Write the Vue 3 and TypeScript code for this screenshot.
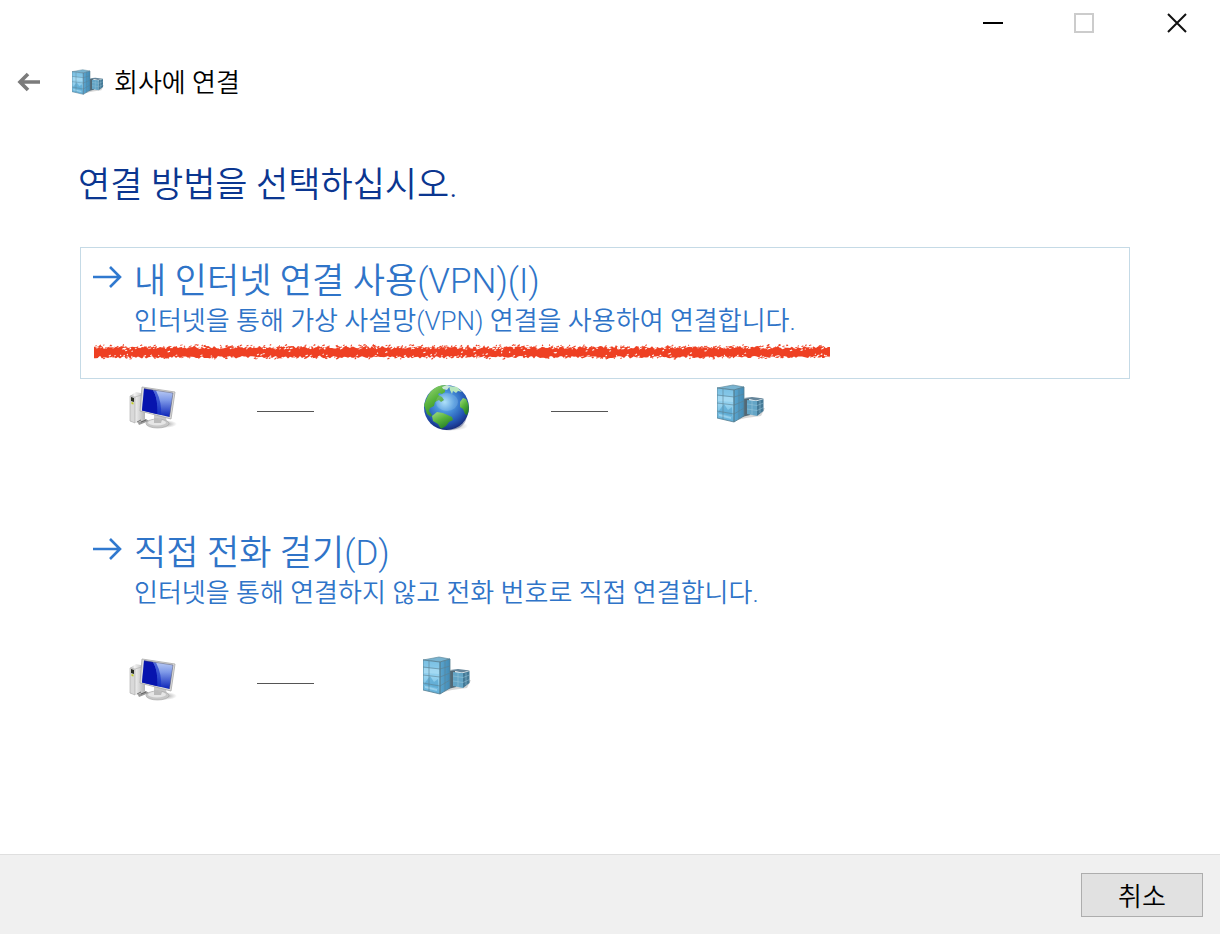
<script setup lang="ts">
type NodeKind = 'computer' | 'globe' | 'building'

interface ConnectionOption {
  id: string
  title: string
  description: string
  highlighted: boolean
  nodes: NodeKind[]
}

const options: ConnectionOption[] = [
  {
    id: 'vpn',
    title: '내 인터넷 연결 사용(VPN)(I)',
    description: '인터넷을 통해 가상 사설망(VPN) 연결을 사용하여 연결합니다.',
    highlighted: true,
    nodes: ['computer', 'globe', 'building'],
  },
  {
    id: 'dial',
    title: '직접 전화 걸기(D)',
    description: '인터넷을 통해 연결하지 않고 전화 번호로 직접 연결합니다.',
    highlighted: false,
    nodes: ['computer', 'building'],
  },
]

// Small seeded generator so the crayon stroke has the same grain on every render.
function createRandom(seed: number): () => number {
  let state = seed
  return () => {
    state = (state * 1664525 + 1013904223) % 4294967296
    return state / 4294967296
  }
}

function crayonBody(): string {
  const random = createRandom(7)
  const top: string[] = []
  const bottom: string[] = []
  for (let x = 1; x <= 738; x += 2) {
    top.push(`${x} ${(2 + random() * 2.5).toFixed(1)}`)
    bottom.unshift(`${x} ${(12 + random() * 2.5).toFixed(1)}`)
  }
  return `M${top.concat(bottom).join('L')}Z`
}

function crayonGrain(seed: number, count: number, from: number, to: number): string {
  const random = createRandom(seed)
  let path = ''
  for (let i = 0; i < count; i++) {
    const x = (random() * 735).toFixed(1)
    const y = (from + random() * (to - from)).toFixed(1)
    const w = (0.8 + random() * 1.6).toFixed(1)
    const h = (0.5 + random() * 0.9).toFixed(1)
    path += `M${x} ${y}l${w} -${h}l0.6 ${h}l-${w} 0.7z`
  }
  return path
}

const strokeBody = crayonBody()
const strokeGaps = crayonGrain(23, 300, 2, 5) + crayonGrain(51, 90, 11, 14) + crayonGrain(77, 40, 6, 11)
const strokeDust = crayonGrain(91, 260, 1, 4) + crayonGrain(37, 90, 13, 15)
</script>

<template>
  <div class="wizard">
    <svg class="defs" aria-hidden="true">
      <defs>
        <linearGradient id="screen" x1="0.6" y1="0" x2="0.6" y2="1">
          <stop offset="0" stop-color="#c3d2f6" />
          <stop offset="0.4" stop-color="#7f9ae8" />
          <stop offset="1" stop-color="#0b23b8" />
        </linearGradient>
        <linearGradient id="metal" x1="0" y1="0" x2="1" y2="0">
          <stop offset="0" stop-color="#a9a9a9" />
          <stop offset="0.3" stop-color="#f2f2f2" />
          <stop offset="1" stop-color="#b5b5b5" />
        </linearGradient>
        <radialGradient id="shade">
          <stop offset="0" stop-color="#555" stop-opacity="0.6" />
          <stop offset="1" stop-color="#777" stop-opacity="0" />
        </radialGradient>
        <radialGradient id="ocean" cx="0.46" cy="0.38" r="0.62">
          <stop offset="0" stop-color="#a4dcf8" />
          <stop offset="0.35" stop-color="#4a94dc" />
          <stop offset="0.75" stop-color="#2457b4" />
          <stop offset="1" stop-color="#182f85" />
        </radialGradient>
        <linearGradient id="land" x1="0" y1="0" x2="0.6" y2="1">
          <stop offset="0" stop-color="#a5dc86" />
          <stop offset="0.5" stop-color="#58b33c" />
          <stop offset="1" stop-color="#247d27" />
        </linearGradient>
        <linearGradient id="glassFront" x1="0" y1="0" x2="0" y2="1">
          <stop offset="0" stop-color="#79bfe2" />
          <stop offset="0.5" stop-color="#94d2f0" />
          <stop offset="1" stop-color="#5fadd6" />
        </linearGradient>
        <linearGradient id="glassSide" x1="0" y1="0" x2="1" y2="0">
          <stop offset="0" stop-color="#5aa5cf" />
          <stop offset="1" stop-color="#438bb5" />
        </linearGradient>

        <symbol id="node-computer" viewBox="0 0 48 48">
          <ellipse cx="36" cy="40" rx="12" ry="4" fill="url(#shade)" />
          <path d="M8 37l9-2 3 2-10 4z" fill="#999" />
          <path d="M1 12l6-4 9 2v26l-9 3-6-2z" fill="url(#metal)" />
          <path d="M1 12l5 1v26l-5-2zM6 13l10-3" fill="#d9d9d9" stroke="#aaa" stroke-width="0.6" />
          <path d="M2 13l3 1v4l-3-1z" fill="#292d24" />
          <path d="M2.5 18l2 0.5v2l-2-0.5z" fill="#c1ce24" />
          <path d="M8 38l4-2M12 38l5-2" stroke="#555" stroke-width="0.8" />
          <path d="M25 30l12 3 1 7H25z" fill="#c8c8c8" />
          <ellipse cx="28.500" cy="39.500" rx="11.500" ry="4.500" fill="#c7c7c7" stroke="#a5a5a5" stroke-width="0.6" />
          <ellipse cx="28" cy="38.500" rx="9" ry="3" fill="#e6e6e6" />
          <path d="M25 34l8 2-1 3h-7z" fill="#bbb" />
          <path d="M13 3l33 5-4 27-31-8z" fill="#ddd" stroke="#a8a8a8" stroke-width="0.8" />
          <path d="M15 4.600l29 4.400-3.500 24-27.500-6.500z" fill="url(#screen)" />
          <path d="M15 4.600l9 1.400q5 8 4.500 24.200L13 26.500z" fill="#0714ae" />
          <path d="M24 6l3 0.500q6 12 5 24.500l-3.500-0.800Q29 14 24 6z" fill="#0d2bc4" opacity="0.6" />
          <path d="M15 4.600l29 4.400-3.500 24" fill="none" stroke="#556" stroke-width="0.5" />
        </symbol>

        <symbol id="node-globe" viewBox="1 0 48 48">
          <ellipse cx="29" cy="42" rx="17" ry="5" fill="url(#shade)" />
          <circle cx="24.500" cy="23.500" r="22.500" fill="url(#ocean)" />
          <path d="M4 16C7 8 12 3 19 1.500L25 1l2 3-4 1 0 3-3 2-3-1-1 2 4 2 2 3-3 2-2-2-4 2-1 4-4 2-1 3 3 4-1 2-4-3-2-6-1-3z" fill="url(#land)" />
          <path d="M10 32l5-4 6 1 9 4 1 3-4 2-3 4-5 3-3-5-5-3z" fill="url(#land)" />
          <path d="M38 18l3-4 3 1c3 5 4 11 1 16l-2-1-2-5-3-2z" fill="url(#land)" />
          <path d="M27 2l8 1 5 5-4-1-2 2-3-2-1 3-2-4z" fill="#b7e6bd" />
          <path d="M20 3l5-2 3 1-3 4-4-1z" fill="#d9efec" opacity="0.85" />
          <path d="M6 32q8 14 20 13 13-1 19-14-1 13-15 15Q13 48 6 32z" fill="#14276d" opacity="0.35" />
          <ellipse cx="25" cy="18" rx="11" ry="9" fill="#e4f6ff" opacity="0.16" />
        </symbol>

        <symbol id="node-building" viewBox="1 0 48 48">
          <path d="M17 37l13-3 15-2 4-8-5 1-14 2z" fill="#888" opacity="0.35" />
          <path d="M25 15l8-1 1 17-8 2z" fill="#526875" />
          <path d="M28 14l8-1 12 1.500-8 2z" fill="#65859a" />
          <path d="M31 16l10 1v15l-10-2z" fill="#64a5c6" />
          <path d="M41 17l6.500-2v12L41 32z" fill="#447996" />
          <path d="M31 20l10 1.500 6.500-2.500M31 25l10 1.500 6.500-3M36 17v14M44 16v13" fill="none" stroke="#9cc8dc" stroke-width="0.5" />
          <path d="M1 4L17 1l11 2-10 3z" fill="#78b3d0" stroke="#628b9e" stroke-width="0.7" />
          <path d="M1 4l17 2v32L1 34z" fill="url(#glassFront)" />
          <path d="M18 6l10-3v29l-10 6z" fill="url(#glassSide)" />
          <path d="M2 28l6-8 4 6 4-3v9L2 29z" fill="#4d9fca" opacity="0.55" />
          <path d="M2 12l15 1v5L2 17zM3 30l12 3v2L3 32z" fill="#b7e4f7" opacity="0.55" />
          <path d="M1 11l17 2 10-3M1 19l17 2 10-4M1 27l17 3 10-6M7 5v30M23 4.500V35" fill="none" stroke="#5c7f90" stroke-width="0.6" />
          <path d="M1 4l17 2v32L1 34zM18 6l10-3v29l-10 6z" fill="none" stroke="#567d91" stroke-width="0.8" />
        </symbol>
      </defs>
    </svg>

    <div class="caption-bar">
      <button class="caption-button" type="button" aria-label="최소화">
        <svg width="22" height="22" viewBox="0 0 22 22"><path d="M1 11h20" stroke="#000" stroke-width="2" /></svg>
      </button>
      <button class="caption-button" type="button" aria-label="최대화" disabled>
        <svg width="22" height="22" viewBox="0 0 22 22"><path d="M2 2h18v18H2z" fill="none" stroke="#ccc" stroke-width="2" /></svg>
      </button>
      <button class="caption-button" type="button" aria-label="닫기">
        <svg width="22" height="22" viewBox="0 0 22 22"><path d="M2 2l18 18M20 2L2 20" stroke="#111" stroke-width="2" /></svg>
      </button>
    </div>

    <header class="title-bar">
      <button class="back" type="button" aria-label="뒤로">
        <svg width="24" height="20" viewBox="0 0 24 20">
          <path d="M4 10h20M12 2l-8 8 8 8" fill="none" stroke="#7b7b7b" stroke-width="3.600" />
        </svg>
      </button>
      <svg class="title-icon" width="32" height="26" viewBox="0 0 32 26" aria-hidden="true">
        <use href="#node-building" width="32" height="32" />
      </svg>
      <span class="title">회사에 연결</span>
    </header>

    <main class="content">
      <h1 class="heading">연결 방법을 선택하십시오.</h1>

      <section v-for="option in options" :key="option.id" class="choice">
        <button class="command" :class="{ highlighted: option.highlighted }" type="button">
          <svg class="arrow" width="30" height="24" viewBox="0 0 30 24" aria-hidden="true">
            <path d="M0 12h27M17 2l10 10-10 10" fill="none" stroke="#3079cf" stroke-width="2.600" />
          </svg>
          <span class="command-text">
            <span class="command-title">{{ option.title }}</span>
            <span class="command-description">{{ option.description }}</span>
          </span>
          <svg v-if="option.highlighted" class="crayon" width="740" height="16" viewBox="0 0 740 16" aria-hidden="true">
            <path :d="strokeBody" fill="#ee4023" />
            <path :d="strokeGaps" fill="#fff" />
            <path :d="strokeDust" fill="#ee4023" />
          </svg>
        </button>
        <div class="diagram" aria-hidden="true">
          <template v-for="(node, index) in option.nodes" :key="node">
            <span v-if="index > 0" class="link-line"></span>
            <svg width="48" height="48"><use :href="`#node-${node}`" /></svg>
          </template>
        </div>
      </section>
    </main>

    <footer class="footer">
      <button class="cancel" type="button">취소</button>
    </footer>
  </div>
</template>

<style>
body {
  margin: 0;
}
</style>

<style scoped>
.wizard {
  box-sizing: border-box;
  display: flex;
  flex-direction: column;
  min-height: 100vh;
  background: #fff;
  color: #000;
  font-family: Roboto, "Noto Sans CJK KR", sans-serif;
  font-weight: 350;
}

button {
  margin: 0;
  padding: 0;
  border: 0;
  background: none;
  color: inherit;
  font: inherit;
}

svg {
  display: block;
  flex: none;
}

.defs {
  position: absolute;
  width: 0;
  height: 0;
}

.caption-bar {
  display: flex;
  justify-content: flex-end;
}

.caption-button {
  display: flex;
  align-items: center;
  justify-content: center;
  width: 92px;
  height: 46px;
}

.caption-button:last-child {
  width: 86px;
  margin-left: 4px;
}

.caption-button:first-child {
  margin-right: -1px;
}

.title-bar {
  display: flex;
  align-items: center;
  height: 72px;
  padding-left: 16px;
}

.title-icon {
  margin-left: 32px;
}

.title {
  margin-left: 10px;
  font-size: 26px;
  line-height: 38px;
  padding-top: 2px;
}

.content {
  flex: 1;
  padding: 44px 90px 64px 80px;
}

.heading {
  margin: 0 0 37px -2px;
  color: #0b3690;
  font-size: 35px;
  font-weight: 350;
  line-height: 48px;
}

.choice + .choice {
  margin-top: 87px;
}

.command {
  box-sizing: border-box;
  display: grid;
  grid-template-columns: 41px 1fr;
  align-content: start;
  width: 100%;
  min-height: 132px;
  padding: 12px;
  border: 1px solid transparent;
  color: #2f74c8;
  text-align: left;
}

.highlighted {
  border-color: #c5dae6;
}

.arrow {
  margin-top: 5px;
}

.command-title,
.command-description {
  display: block;
}

.command-title {
  font-size: 35px;
  line-height: 44px;
}

.command-description {
  font-size: 26px;
  line-height: 34px;
}

.crayon {
  grid-column: 1 / -1;
  margin-top: 6px;
}

.diagram {
  display: flex;
  margin: 5px 0 0 49px;
}

.link-line {
  width: 57px;
  height: 1px;
  margin: 27px 109px 0 80px;
  background: #555;
}

.footer {
  box-sizing: border-box;
  display: flex;
  justify-content: flex-end;
  align-items: center;
  height: 80px;
  padding-right: 17px;
  border-top: 1px solid #dfdfdf;
  background: #f0f0f0;
}

.cancel {
  width: 122px;
  height: 44px;
  border: 1px solid #adadad;
  background: #e1e1e1;
  font-size: 26px;
}
</style>
